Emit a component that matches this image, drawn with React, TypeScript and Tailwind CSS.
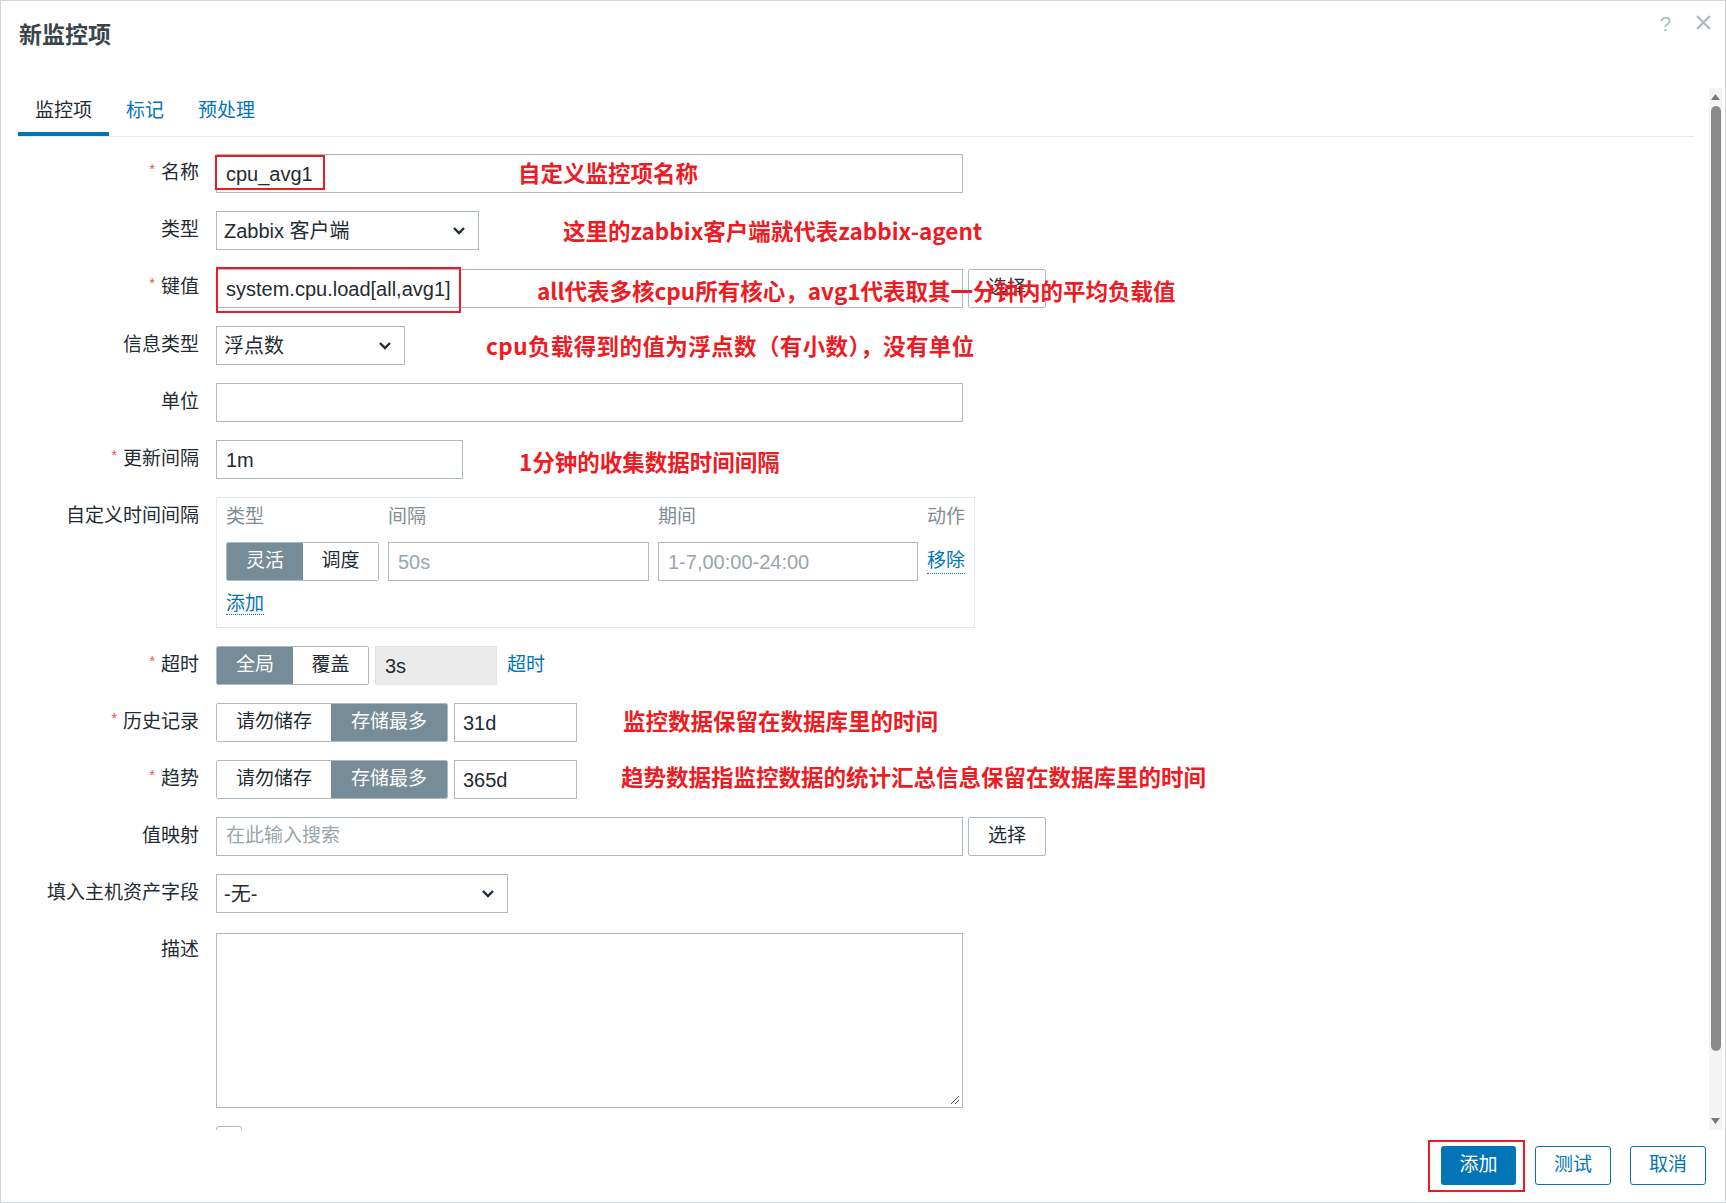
import type { ReactNode } from 'react';

const Label = ({ text, required }: { text: string; required?: boolean }) => (
  <div className="w-[181px] shrink-0 h-[39px] flex items-center justify-end text-[19px] text-[#1f2c33] whitespace-nowrap">
    {required ? <span className="text-[#e45959] text-[15px] mr-[6px] -mt-[8px]">*</span> : null}
    {text}
  </div>
);

const Row = ({ label, required, children }: { label: string; required?: boolean; children?: ReactNode }) => (
  <div className="flex items-start gap-[17px]">
    <Label text={label} required={required} />
    {children}
  </div>
);

const Chevron = () => (
  <svg width="14" height="10" viewBox="0 0 14 10" className="shrink-0">
    <polyline points="2,2 7,7 12,2" fill="none" stroke="#1f2c33" strokeWidth="2.4" />
  </svg>
);

const SelectBox = ({ value, w }: { value: string; w: string }) => (
  <div className={`${w} h-[39px] border border-[#acbbc2] bg-white pl-[7px] pr-[12px] flex items-center justify-between text-[20px] text-[#1f2c33]`}>
    <span>{value}</span>
    <Chevron />
  </div>
);

const Btn = ({ text }: { text: string }) => (
  <div className="w-[78px] h-[39px] border border-[#acbbc2] rounded-[2px] bg-white flex items-center justify-center text-[19px] text-[#1f2c33]">
    {text}
  </div>
);

const Segment = ({ items, active }: { items: { text: string; w: string }[]; active: number }) => (
  <div className="flex h-[39px] border border-[#acbbc2] rounded-[2px] overflow-hidden">
    {items.map((it, i) => (
      <div
        key={it.text}
        className={`${it.w} flex items-center justify-center text-[19px] ${
          i === active ? 'bg-[#768d99] text-white' : 'bg-white text-[#1f2c33]'
        }`}
      >
        {it.text}
      </div>
    ))}
  </div>
);

export default function App() {
  return (
    <div className="relative w-[1726px] h-[1203px] bg-white border border-[#cfd7db] overflow-hidden font-['Liberation_Sans','Noto_Sans_CJK_SC',sans-serif] text-[#1f2c33]">
      {/* header */}
      <div className="relative h-[87px]">
        <div className="absolute left-[18px] top-[21px] text-[23px] leading-[26px] font-bold text-[#38454d]">新监控项</div>
        <div className="absolute left-[1659px] top-[8px] text-[20px] text-[#acbbc2]">?</div>
        <svg className="absolute left-[1694px] top-[13px]" width="17" height="17" viewBox="0 0 17 17">
          <path d="M2 2 L15 15 M15 2 L2 15" stroke="#acbbc2" strokeWidth="2.4" />
        </svg>
      </div>

      {/* body */}
      <div className="flex h-[1042px] overflow-hidden">
        <div className="flex-1 pl-[17px] pr-[15px] overflow-hidden">
          <div className="flex items-end h-[49px] border-b border-[#e5eaec] text-[19px]">
            <div className="h-[48px] px-[17px] pt-[3px] flex items-center border-b-[4px] border-[#0275b8] text-[#1f2c33]">监控项</div>
            <div className="h-[48px] px-[17px] pt-[3px] flex items-center pb-[4px] text-[#0275b8]">标记</div>
            <div className="h-[48px] px-[17px] pt-[3px] flex items-center pb-[4px] text-[#0275b8]">预处理</div>
          </div>

          <div className="mt-[17px] flex flex-col gap-[18px]">
            <Row label="名称" required>
              <div className="w-[747px] h-[39px] border border-[#acbbc2] px-[9px] flex items-center text-[20px]">cpu_avg1</div>
            </Row>
            <Row label="类型">
              <SelectBox value="Zabbix 客户端" w="w-[263px]" />
            </Row>
            <Row label="键值" required>
              <div className="mt-[1px] flex gap-[5px]">
                <div className="w-[747px] h-[39px] border border-[#acbbc2] px-[9px] flex items-center text-[20px]">
                  system.cpu.load[all,avg1]
                </div>
                <Btn text="选择" />
              </div>
            </Row>
            <Row label="信息类型">
              <SelectBox value="浮点数" w="w-[189px]" />
            </Row>
            <Row label="单位">
              <div className="w-[747px] h-[39px] border border-[#acbbc2]" />
            </Row>
            <Row label="更新间隔" required>
              <div className="w-[247px] h-[39px] border border-[#acbbc2] px-[9px] flex items-center text-[20px]">1m</div>
            </Row>
            <Row label="自定义时间间隔">
              <div className="w-[759px] border border-[#e3e8eb] pl-[9px] pt-[7px] pb-[11px]">
                <div className="grid grid-cols-[153px_261px_260px_auto] gap-x-[9px] text-[19px]">
                  <div className="leading-[24px] text-[#7f8d95]">类型</div>
                  <div className="leading-[24px] text-[#7f8d95]">间隔</div>
                  <div className="leading-[24px] text-[#7f8d95]">期间</div>
                  <div className="leading-[24px] text-[#7f8d95]">动作</div>
                  <div className="mt-[13px]">
                    <Segment
                      items={[
                        { text: '灵活', w: 'w-[76px]' },
                        { text: '调度', w: 'w-[75px]' },
                      ]}
                      active={0}
                    />
                  </div>
                  <div className="mt-[13px] h-[39px] border border-[#acbbc2] px-[9px] flex items-center text-[20px] text-[#9aa5ab]">50s</div>
                  <div className="mt-[13px] h-[39px] border border-[#acbbc2] px-[9px] flex items-center text-[20px] text-[#9aa5ab]">1-7,00:00-24:00</div>
                  <div className="mt-[13px] h-[39px] flex items-center">
                    <span className="text-[#0275b8] border-b border-dotted border-[#0275b8] leading-[24px]">移除</span>
                  </div>
                </div>
                <div className="mt-[11px] leading-[24px] text-[19px]">
                  <span className="text-[#0275b8] border-b border-dotted border-[#0275b8]">添加</span>
                </div>
              </div>
            </Row>
            <Row label="超时" required>
              <div className="flex items-center">
                <Segment
                  items={[
                    { text: '全局', w: 'w-[76px]' },
                    { text: '覆盖', w: 'w-[75px]' },
                  ]}
                  active={0}
                />
                <div className="ml-[6px] w-[122px] h-[39px] bg-[#ebebeb] border border-[#e3e3e3] px-[9px] flex items-center text-[20px]">3s</div>
                <span className="ml-[10px] text-[19px] text-[#0275b8]">超时</span>
              </div>
            </Row>
            <Row label="历史记录" required>
              <div className="flex items-center">
                <Segment
                  items={[
                    { text: '请勿储存', w: 'w-[114px]' },
                    { text: '存储最多', w: 'w-[116px]' },
                  ]}
                  active={1}
                />
                <div className="ml-[6px] w-[123px] h-[39px] border border-[#acbbc2] px-[8px] flex items-center text-[20px]">31d</div>
              </div>
            </Row>
            <Row label="趋势" required>
              <div className="flex items-center">
                <Segment
                  items={[
                    { text: '请勿储存', w: 'w-[114px]' },
                    { text: '存储最多', w: 'w-[116px]' },
                  ]}
                  active={1}
                />
                <div className="ml-[6px] w-[123px] h-[39px] border border-[#acbbc2] px-[8px] flex items-center text-[20px]">365d</div>
              </div>
            </Row>
            <Row label="值映射">
              <div className="flex gap-[5px]">
                <div className="w-[747px] h-[39px] border border-[#acbbc2] px-[9px] flex items-center text-[19px] text-[#9aa5ab]">
                  在此输入搜索
                </div>
                <Btn text="选择" />
              </div>
            </Row>
            <Row label="填入主机资产字段">
              <SelectBox value="-无-" w="w-[292px]" />
            </Row>
            <Row label="描述">
              <div className="relative mt-[2px] w-[747px] h-[175px] border border-[#acbbc2]">
                <svg className="absolute right-[2px] bottom-[2px]" width="11" height="11" viewBox="0 0 11 11">
                  <path d="M10 2 L2 10 M10 6 L6 10" stroke="#555" strokeWidth="1" />
                </svg>
              </div>
            </Row>
            <Row label="">
              <div className="w-[26px] h-[26px] border border-[#acbbc2] rounded-[3px]" />
            </Row>
          </div>
        </div>

        {/* scrollbar */}
        <div className="w-[13px] mr-[3px] bg-[#f4f4f4] flex flex-col items-center">
          <svg className="mt-[6px]" width="9" height="6" viewBox="0 0 9 6">
            <polygon points="4.5,0 9,6 0,6" fill="#7a7a7a" />
          </svg>
          <div className="mt-[6px] w-[10px] h-[945px] rounded-full bg-[#8a8a8a]" />
          <svg className="mt-[67px]" width="9" height="6" viewBox="0 0 9 6">
            <polygon points="0,0 9,0 4.5,6" fill="#7a7a7a" />
          </svg>
        </div>
      </div>

      {/* footer */}
      <div className="flex justify-end gap-[19px] pr-[19px] pt-[16px]">
        <div className="w-[75px] h-[39px] rounded-[3px] bg-[#0275b8] text-white text-[19px] flex items-center justify-center">添加</div>
        <div className="w-[76px] h-[39px] rounded-[3px] border border-[#0275b8] text-[#0275b8] text-[19px] flex items-center justify-center">测试</div>
        <div className="w-[76px] h-[39px] rounded-[3px] border border-[#0275b8] text-[#0275b8] text-[19px] flex items-center justify-center">取消</div>
      </div>

      {/* annotations */}
      <div className="absolute left-[214px] top-[154px] w-[110px] h-[35px] border-2 border-[#ed1c24]" />
      <div className="absolute left-[215px] top-[266px] w-[245px] h-[46px] border-2 border-[#ed1c24]" />
      <div className="absolute left-[1427px] top-[1139px] w-[97px] h-[52px] border-2 border-[#ed1c24]" />

      <div className="absolute inset-0 pointer-events-none font-['Noto_Sans_CJK_SC',sans-serif] font-bold text-[22.5px] leading-none text-[#ed1c24] whitespace-nowrap">
        <div className="absolute left-[517px] top-[160px]">自定义监控项名称</div>
        <div className="absolute left-[562px] top-[218px]">这里的zabbix客户端就代表zabbix-agent</div>
        <div className="absolute left-[536px] top-[278px]">all代表多核cpu所有核心，avg1代表取其一分钟内的平均负载值</div>
        <div className="absolute left-[485px] top-[333px] tracking-[0.4px]">cpu负载得到的值为浮点数（有小数），没有单位</div>
        <div className="absolute left-[518px] top-[449px]">1分钟的收集数据时间间隔</div>
        <div className="absolute left-[622px] top-[708px]">监控数据保留在数据库里的时间</div>
        <div className="absolute left-[620px] top-[764px]">趋势数据指监控数据的统计汇总信息保留在数据库里的时间</div>
      </div>
    </div>
  );
}
